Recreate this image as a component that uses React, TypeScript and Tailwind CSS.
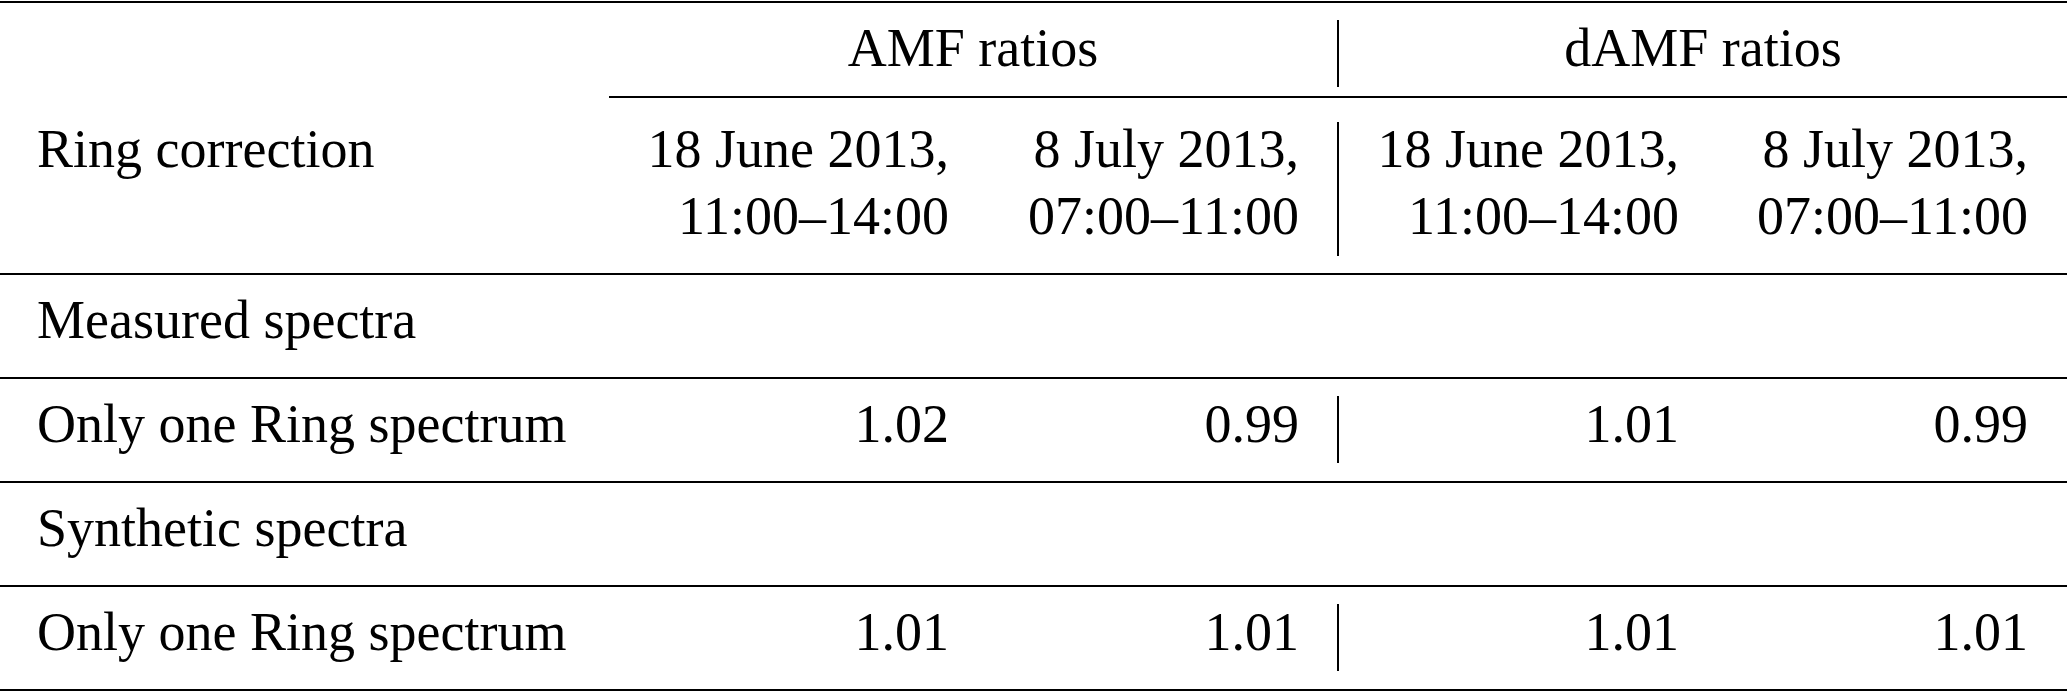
const cols = "grid grid-cols-[609px_377px_351px_2px_378px_350px]";

type DataRow = { label: string; values: string[] };

const sections: { title: string; rows: DataRow[] }[] = [
  {
    title: "Measured spectra",
    rows: [{ label: "Only one Ring spectrum", values: ["1.02", "0.99", "1.01", "0.99"] }],
  },
  {
    title: "Synthetic spectra",
    rows: [{ label: "Only one Ring spectrum", values: ["1.01", "1.01", "1.01", "1.01"] }],
  },
];

function Bar({ tall }: { tall?: boolean }) {
  return (
    <div className={tall ? "pt-[24px]" : "pt-[17px]"}>
      <div className={tall ? "h-[134px] w-[2px] bg-black" : "h-[67px] w-[2px] bg-black"} />
    </div>
  );
}

function DateCell({ date, time, pad }: { date: string; time: string; pad: string }) {
  return (
    <div className={`pt-[18px] text-right whitespace-nowrap ${pad}`}>
      <div>{date}</div>
      <div>{time}</div>
    </div>
  );
}

export default function App() {
  return (
    <div className="w-[2067px] bg-white pt-px font-['Liberation_Serif','Times_New_Roman',serif] text-[54px] leading-[67px] text-black">
      <div className="border-t-2 border-black">
        {/* group headings */}
        <div className={`${cols} h-[93px]`}>
          <div />
          <div className="col-span-2 pt-[12px] text-center">AMF ratios</div>
          <Bar />
          <div className="col-span-2 pt-[12px] text-center">dAMF ratios</div>
        </div>
        <div className={`${cols} h-[2px]`}>
          <div className="col-span-5 col-start-2 bg-black" />
        </div>

        {/* column headings */}
        <div className={`${cols} h-[177px] border-b-2 border-black`}>
          <div className="pl-[37px] pt-[18px] whitespace-nowrap">Ring correction</div>
          <DateCell date="18 June 2013," time="11:00–14:00" pad="pr-[37px]" />
          <DateCell date="8 July 2013," time="07:00–11:00" pad="pr-[38px]" />
          <Bar tall />
          <DateCell date="18 June 2013," time="11:00–14:00" pad="pr-[38px]" />
          <DateCell date="8 July 2013," time="07:00–11:00" pad="pr-[39px]" />
        </div>

        {sections.map((s) => (
          <div key={s.title}>
            <div className={`${cols} h-[104px] border-b-2 border-black`}>
              <div className="col-span-6 pl-[37px] pt-[12px] whitespace-nowrap">{s.title}</div>
            </div>
            {s.rows.map((r, i) => (
              <div key={i} className={`${cols} h-[104px] border-b-2 border-black`}>
                <div className="pl-[37px] pt-[12px] whitespace-nowrap">{r.label}</div>
                <div className="pr-[37px] pt-[12px] text-right">{r.values[0]}</div>
                <div className="pr-[38px] pt-[12px] text-right">{r.values[1]}</div>
                <Bar />
                <div className="pr-[38px] pt-[12px] text-right">{r.values[2]}</div>
                <div className="pr-[39px] pt-[12px] text-right">{r.values[3]}</div>
              </div>
            ))}
          </div>
        ))}
      </div>
    </div>
  );
}
